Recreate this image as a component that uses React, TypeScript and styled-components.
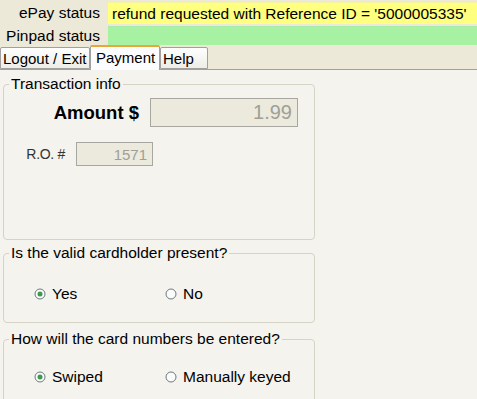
import React from "react";
import styled, { createGlobalStyle } from "styled-components";

const Global = createGlobalStyle`
  html, body { margin: 0; padding: 0; }
  body {
    width: 477px; height: 399px; overflow: hidden;
    background: #f4f3ee;
    font-family: "Liberation Sans", Arial, sans-serif;
    color: #000;
  }
`;

const Window = styled.div`
  width: 477px;
  height: 399px;
  display: flex;
  flex-direction: column;
  background: #f4f3ee;
`;

const Header = styled.div`
  background: #ece9d8;
  padding-top: 2px;
  display: grid;
  grid-template-columns: 108px 1fr;
  grid-template-rows: 22px 19px;
  row-gap: 2px;
`;

const StatusLabel = styled.div`
  font-size: 15.5px;
  text-align: right;
  padding-right: 8px;
  display: flex;
  align-items: center;
  justify-content: flex-end;
`;

const StatusField = styled.div<{ $bg: string; $edge: string }>`
  background: ${(p) => p.$bg};
  font-size: 15.5px;
  display: flex;
  align-items: center;
  padding-left: 4px;
  border-top: 1px solid ${(p) => p.$edge};
`;

const TabBar = styled.div`
  background: #ece9d8;
  height: 25px;
  display: flex;
  align-items: flex-end;
  border-bottom: 1px solid #a0a0a0;
`;

const Tab = styled.div<{ $active?: boolean; $w: number }>`
  box-sizing: border-box;
  width: ${(p) => p.$w}px;
  height: ${(p) => (p.$active ? 25 : 22)}px;
  margin-bottom: ${(p) => (p.$active ? -1 : 0)}px;
  background: ${(p) => (p.$active ? "#fcfcfe" : "linear-gradient(#fefefe, #eeede6)")};
  border: 1px solid #a0a0a0;
  border-bottom: ${(p) => (p.$active ? "none" : "1px solid #a0a0a0")};
  border-top: ${(p) => (p.$active ? "2px solid #e8a838" : "1px solid #a0a0a0")};
  border-radius: 2px 2px 0 0;
  font-size: 15px;
  display: flex;
  align-items: center;
  padding-left: ${(p) => (p.$active ? 5 : 2)}px;
  padding-bottom: ${(p) => (p.$active ? 3 : 0)}px;
  white-space: nowrap;
  overflow: hidden;
`;

const Content = styled.div`
  flex: 1;
  background: #f4f3ee;
  padding: 6px 0 0 3px;
  display: flex;
  flex-direction: column;
`;

const Group = styled.fieldset<{ $h: number; $gap?: number }>`
  box-sizing: border-box;
  margin: ${(p) => p.$gap ?? 0}px 0 0 0;
  width: 312px;
  height: ${(p) => p.$h}px;
  border: 1px solid #d5d2c6;
  border-radius: 4px;
  padding: 0;
  flex-shrink: 0;
`;

const Legend = styled.legend`
  font-size: 15.5px;
  padding: 0 2px;
  margin-left: 5px;
  line-height: 16px;
`;

const AmountRow = styled.div`
  display: flex;
  align-items: center;
  margin-top: 6px;
`;

const AmountLabel = styled.div`
  font-weight: bold;
  font-size: 18.5px;
  width: 135px;
  text-align: right;
  margin-right: 11px;
`;

const DisabledField = styled.div<{ $w: number; $h: number; $fs: number }>`
  box-sizing: border-box;
  width: ${(p) => p.$w}px;
  height: ${(p) => p.$h}px;
  background: #ebeadd;
  border: 1px solid #a7a6a0;
  color: #a09f96;
  font-size: ${(p) => p.$fs}px;
  display: flex;
  align-items: center;
  justify-content: flex-end;
  padding-right: 5px;
`;

const RoRow = styled.div`
  display: flex;
  align-items: center;
  margin-top: 15px;
`;

const RoLabel = styled.div`
  font-size: 14px;
  color: #333;
  width: 61px;
  text-align: right;
  margin-right: 11px;
  letter-spacing: -0.3px;
`;

const RadioRow = styled.div<{ $top: number }>`
  display: flex;
  align-items: center;
  margin-top: ${(p) => p.$top}px;
  padding-left: 30px;
  height: 18px;
`;

const RadioItem = styled.label<{ $w?: number }>`
  display: flex;
  align-items: center;
  gap: 6px;
  width: ${(p) => (p.$w ? `${p.$w}px` : "auto")};
  font-size: 15.5px;
`;

const Radio = ({ checked }: { checked?: boolean }) => (
  <svg width="12" height="12" viewBox="0 0 12 12">
    <circle cx="6" cy="6" r="5" fill="#fbfbf8" stroke="#6a7a86" strokeWidth="1" />
    {checked && <circle cx="6" cy="6" r="2.5" fill="#3d9a4b" />}
  </svg>
);

export default function App() {
  return (
    <Window>
      <Global />
      <Header>
        <StatusLabel>ePay status</StatusLabel>
        <StatusField $bg="#ffff80" $edge="#f4f4a0">refund requested with Reference ID = '5000005335'</StatusField>
        <StatusLabel>Pinpad status</StatusLabel>
        <StatusField $bg="#a6f2a2" $edge="#a8eca8" />
      </Header>
      <TabBar>
        <Tab $w={90}>Logout / Exit</Tab>
        <Tab $w={70} $active>Payment</Tab>
        <Tab $w={48}>Help</Tab>
      </TabBar>
      <Content>
        <Group $h={164}>
          <Legend>Transaction info</Legend>
          <AmountRow>
            <AmountLabel>Amount $</AmountLabel>
            <DisabledField $w={148} $h={29} $fs={20}>1.99</DisabledField>
          </AmountRow>
          <RoRow>
            <RoLabel>R.O. #</RoLabel>
            <DisabledField $w={77} $h={24} $fs={15}>1571</DisabledField>
          </RoRow>
        </Group>
        <Group $h={78} $gap={5}>
          <Legend>Is the valid cardholder present?</Legend>
          <RadioRow $top={24}>
            <RadioItem $w={131}><Radio checked />Yes</RadioItem>
            <RadioItem><Radio />No</RadioItem>
          </RadioRow>
        </Group>
        <Group $h={80} $gap={8}>
          <Legend>How will the card numbers be entered?</Legend>
          <RadioRow $top={21}>
            <RadioItem $w={131}><Radio checked />Swiped</RadioItem>
            <RadioItem><Radio />Manually keyed</RadioItem>
          </RadioRow>
        </Group>
      </Content>
    </Window>
  );
}
